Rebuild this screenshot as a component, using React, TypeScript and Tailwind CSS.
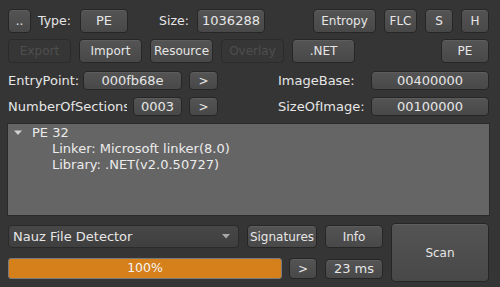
import React from 'react'

const btn =
  'flex items-center justify-center rounded-[4px] border border-[#262626] bg-gradient-to-b from-[#545454] to-[#484848] text-[#e6e6e6] shadow-[inset_0_1px_0_rgba(255,255,255,0.06)] whitespace-nowrap overflow-hidden'
const off =
  'flex items-center justify-center rounded-[4px] border border-[#2b2b2b] bg-[#363636] text-[#4e4e4e] whitespace-nowrap'

export default function App() {
  return (
    <div className="w-[500px] h-[287px] bg-[#353535] font-['DejaVu_Sans',sans-serif] text-[12px] text-[#e6e6e6] overflow-hidden select-none">
      {/* top toolbar */}
      <div className="flex items-center h-[24px] mt-[9px]">
        <button className={`${btn} ml-[8px] w-[23px] h-[24px]`}>..</button>
        <span className="ml-[7px] w-[42px] text-[12.5px]">Type:</span>
        <button className={`${btn} w-[48px] h-[24px] text-[13px]`}>PE</button>
        <span className="ml-[31px] w-[38px] text-[12.5px]">Size:</span>
        <div className={`${btn} w-[68px] h-[24px] text-[13px]`}>1036288</div>
        <button className={`${btn} ml-[48px] w-[63px] h-[24px]`}>Entropy</button>
        <button className={`${btn} ml-[8px] w-[33px] h-[24px]`}>FLC</button>
        <button className={`${btn} ml-[8px] w-[28px] h-[24px]`}>S</button>
        <button className={`${btn} ml-[8px] w-[28px] h-[24px]`}>H</button>
      </div>

      <div className="flex items-center h-[24px] mt-[6px]">
        <button className={`${off} ml-[8px] w-[63px] h-[24px]`}>Export</button>
        <button className={`${btn} ml-[8px] w-[63px] h-[24px]`}>Import</button>
        <button className={`${btn} ml-[8px] w-[63px] h-[24px]`}>Resource</button>
        <button className={`${off} ml-[8px] w-[63px] h-[24px]`}>Overlay</button>
        <button className={`${btn} ml-[8px] w-[63px] h-[24px]`}>.NET</button>
        <button className={`${btn} ml-[86px] w-[48px] h-[24px]`}>PE</button>
      </div>

      {/* header fields */}
      <div className="flex items-center h-[19px] mt-[8px] text-[13px]">
        <span className="ml-[8px] w-[75px]">EntryPoint:</span>
        <div className={`${btn} w-[99px] h-[19px]`}>000fb68e</div>
        <button className={`${btn} ml-[7px] w-[29px] h-[19px] text-[12px]`}>&gt;</button>
        <span className="ml-[60px] w-[93px]">ImageBase:</span>
        <div className={`${btn} w-[118px] h-[19px]`}>00400000</div>
      </div>

      <div className="flex items-center h-[19px] mt-[7px] text-[13px]">
        <span className="ml-[8px] w-[119px] overflow-hidden whitespace-nowrap">NumberOfSections</span>
        <div className={`${btn} ml-[6px] w-[49px] h-[19px]`}>0003</div>
        <button className={`${btn} ml-[7px] w-[29px] h-[19px] text-[12px]`}>&gt;</button>
        <span className="ml-[60px] w-[93px]">SizeOfImage:</span>
        <div className={`${btn} w-[118px] h-[19px]`}>00100000</div>
      </div>

      {/* result tree */}
      <div className="ml-[7px] mt-[7px] w-[483px] h-[93px] border border-[#2a2a2a] bg-[#656565] pt-[1px] text-[13px] text-[#ececec]">
        <div className="flex items-center h-[16px]">
          <svg width="10" height="6" viewBox="0 0 10 6" className="ml-[5px]">
            <path d="M1 0.5 H9 L5 5 Z" fill="#d0d0d0" />
          </svg>
          <span className="ml-[9px]">PE 32</span>
        </div>
        <div className="h-[16px] flex items-center pl-[44px]">Linker: Microsoft linker(8.0)</div>
        <div className="h-[16px] flex items-center pl-[44px]">Library: .NET(v2.0.50727)</div>
      </div>

      {/* bottom */}
      <div className="flex mt-[7px] ml-[8px]">
        <div className="flex flex-col">
          <div className="flex items-center mt-[2px] h-[23px]">
            <div className="flex items-center w-[231px] h-[23px] rounded-[4px] border border-[#2a2a2a] bg-gradient-to-b from-[#474747] to-[#3f3f3f] pl-[4px] pr-[8px]">
              <span className="flex-1 text-[13px]">Nauz File Detector</span>
              <svg width="8" height="5" viewBox="0 0 8 5">
                <path d="M0 0 H8 L4 4.5 Z" fill="#a8a8a8" />
              </svg>
            </div>
            <button className={`${btn} ml-[8px] w-[70px] h-[23px]`}>Signatures</button>
            <button className={`${btn} ml-[8px] w-[58px] h-[23px]`}>Info</button>
          </div>
          <div className="flex items-center mt-[10px] h-[21px]">
            <div className="w-[274px] h-[21px] rounded-[3px] border border-[#7a7a7a] bg-[#d6801c] flex items-center justify-center text-[12.5px] text-[#f4f4f4]">
              100%
            </div>
            <button className={`${btn} ml-[7px] w-[28px] h-[21px]`}>&gt;</button>
            <div className={`${btn} ml-[8px] w-[58px] h-[20px] text-[13px]`}>23 ms</div>
          </div>
        </div>
        <button className={`${btn} ml-[8px] w-[98px] h-[59px]`}>Scan</button>
      </div>
    </div>
  )
}
